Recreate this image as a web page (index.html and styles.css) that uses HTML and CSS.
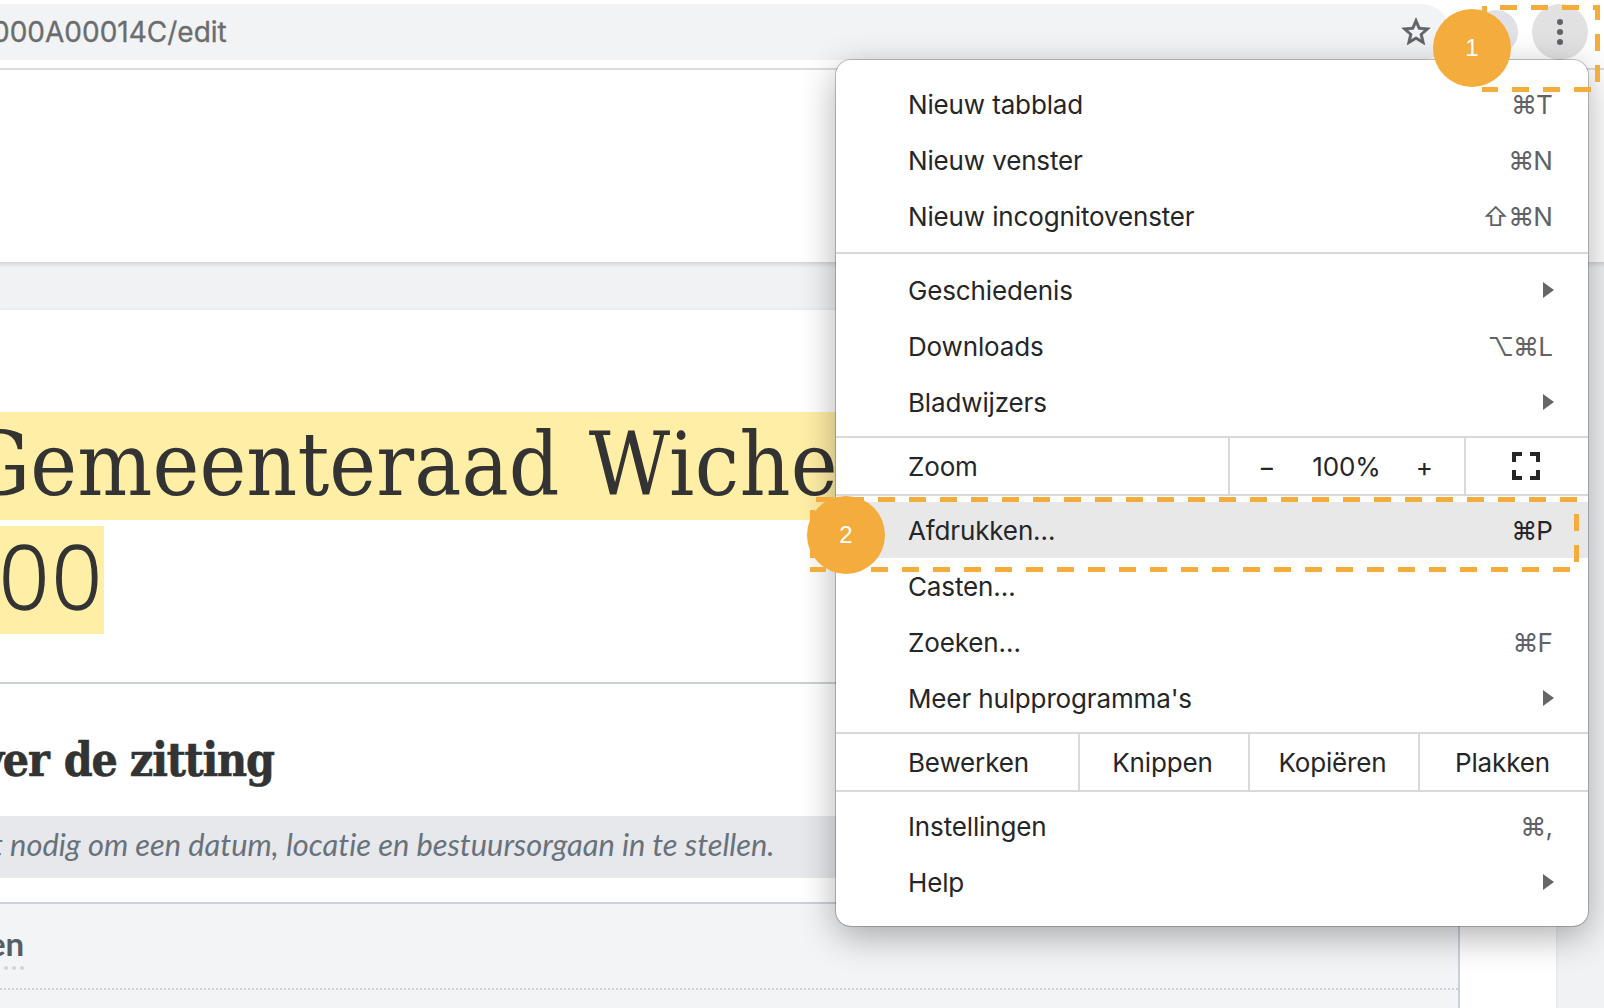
FILE: index.html
```html
<!DOCTYPE html>
<html lang="nl">
<head>
<meta charset="utf-8">
<title>Afdrukken</title>
<link rel="stylesheet" href="styles.css">
</head>
<body>
<div class="screen">
  <div class="toolbar">
    <div class="omnibox">
      <span class="url">000A00014C/edit</span>
      <svg class="star" viewBox="0 0 24 24"><path d="M22 9.24l-7.19-.62L12 2 9.19 8.63 2 9.24l5.46 4.73L5.82 21 12 17.27 18.18 21l-1.63-7.03L22 9.24zM12 15.4l-3.76 2.27 1-4.28-3.32-2.88 4.38-.38L12 6.1l1.71 4.04 4.38.38-3.32 2.88 1 4.28L12 15.4z"/></svg>
    </div>
    <div class="avatar"></div>
    <div class="more"><i></i><i></i><i></i></div>
  </div>
  <header class="page-header"></header>
  <main class="sheet">
    <h1 class="title">
      <span class="mark line-one"><span class="word-one">Gemeenteraad</span> <span class="word-two">Wiche</span></span>
      <span class="mark line-two">00</span>
    </h1>
    <h2 class="subtitle"><span class="cut">ver</span> <span class="rest">de zitting</span></h2>
    <p class="notice"><span>t nodig om een datum, locatie en bestuursorgaan in te stellen.</span></p>
    <div class="panel"><div class="panel-row"><span class="term">en</span></div></div>
  </main>

  <nav class="menu">
    <div class="group first">
      <div class="item"><span>Nieuw tabblad</span><kbd>⌘T</kbd></div>
      <div class="item"><span>Nieuw venster</span><kbd>⌘N</kbd></div>
      <div class="item"><span>Nieuw incognitovenster</span><kbd>⇧⌘N</kbd></div>
    </div>
    <div class="group history">
      <div class="item"><span>Geschiedenis</span><b class="arrow"></b></div>
      <div class="item"><span>Downloads</span><kbd>⌥⌘L</kbd></div>
      <div class="item"><span>Bladwijzers</span><b class="arrow"></b></div>
    </div>
    <div class="zoom-row">
      <span class="label">Zoom</span>
      <span class="zoom-controls"><span>−</span><span class="percent">100%</span><span>+</span></span>
      <span class="fullscreen"><svg viewBox="0 0 28 28"><path d="M0 10V0h10v4H4v6zM18 0h10v10h-4V4h-6zM0 18h4v6h6v4H0zM24 18h4v10H18v-4h6z"/></svg></span>
    </div>
    <div class="group">
      <div class="item active"><span>Afdrukken…</span><kbd>⌘P</kbd></div>
      <div class="item"><span>Casten…</span></div>
      <div class="item"><span>Zoeken…</span><kbd>⌘F</kbd></div>
      <div class="item"><span>Meer hulpprogramma's</span><b class="arrow"></b></div>
    </div>
    <div class="edit-row">
      <span class="label">Bewerken</span><span>Knippen</span><span>Kopiëren</span><span>Plakken</span>
    </div>
    <div class="group last">
      <div class="item"><span>Instellingen</span><kbd>⌘,</kbd></div>
      <div class="item"><span>Help</span><b class="arrow"></b></div>
    </div>
  </nav>

  <svg class="frames" viewBox="0 0 1604 1008">
    <path d="M1500 7.5H1600M1482 89.5H1498M1512 89.5H1591M816 499.5H1577M810 569.5H826M840 569.5H1571"/>
    <path d="M1597.5 5V20M1597.5 34V92M1576.5 514V562M812.5 510V558M1484.5 6V23"/>
  </svg>
  <div class="badge one">1</div>
  <div class="badge two">2</div>
</div>
</body>
</html>
```
FILE: styles.css
```css
* { box-sizing: border-box; }
body { margin: 0; }
.screen { position: relative; width: 1604px; height: 1008px; overflow: hidden; display: flex; flex-direction: column; background: #f0f2f4; font-family: Inter, "Liberation Sans", sans-serif; }

.toolbar { flex: none; display: flex; align-items: center; height: 70px; padding: 4px 16px 8px 0; background: #fff; border-bottom: 2px solid #dadce0; }
.omnibox { display: flex; align-items: center; justify-content: space-between; width: 1450px; height: 56px; padding-right: 17px; background: #f1f3f4; border-radius: 0 28px 28px 0; }
.url { margin-left: -8px; font-size: 28px; color: #6b6c6e; -webkit-text-stroke: .3px #6b6c6e; white-space: nowrap; }
.star { width: 34px; height: 34px; fill: #5f6368; stroke: #5f6368; stroke-width: .5; }
.avatar { width: 44px; height: 44px; margin-left: 24px; border-radius: 50%; background: #dfe1e7; }
.more { display: flex; flex-direction: column; align-items: center; justify-content: center; gap: 4px; width: 56px; height: 56px; margin-left: 14px; border-radius: 50%; background: #e1e1e1; }
.more i { width: 6px; height: 6px; border-radius: 50%; background: #5f6368; }

.page-header { flex: none; height: 192px; margin: 0 -10px; background: #fff; box-shadow: 0 1px 6px rgba(0,0,0,.2); clip-path: inset(0 0 -10px 0); }

.sheet { flex: none; width: 1556px; height: 720px; margin-top: 48px; padding-top: 102px; background: #fff; box-shadow: 0 0 4px rgba(0,0,0,.08); }
.title { display: flex; flex-direction: column; align-items: flex-start; gap: 6px; height: 272px; margin: 0; border-bottom: 2px solid #cbd0d6; font: 400 88px/106px "DejaVu Serif Condensed", "DejaVu Serif", serif; font-stretch: condensed; color: #333; }
.mark { height: 108px; background: #ffeea5; white-space: nowrap; }
.line-one { width: 1000px; }
.word-one { letter-spacing: .1px; margin-left: -33px; }
.word-two { margin-left: 4px; letter-spacing: .4px; }
.line-two { width: 104px; margin-left: -1px; width: 105px; font: 300 88px/98px "Open Sans", sans-serif; letter-spacing: 2.5px; -webkit-text-stroke: 1.4px #333; }
.subtitle { height: 132px; margin: 0; padding-top: 46px; font: 700 46px/60px "DejaVu Serif Condensed", "DejaVu Serif", serif; font-stretch: condensed; letter-spacing: -1.2px; color: #333; -webkit-text-stroke: .6px #333; white-space: nowrap; }
.cut { margin-left: -20px; }
.rest { margin-left: 2px; }
.notice { height: 62px; margin: 0; background: #e6e8ec; font: italic 400 30.8px/58px Lato, sans-serif; font-variant-ligatures: none; color: #69717b; white-space: nowrap; }
.notice span { margin-left: -8px; }
.panel { width: 1460px; height: 200px; margin-top: 24px; background: #f3f4f6; border: solid #cbd0da; border-width: 2px 2px 0 0; }
.panel-row { height: 86px; padding-top: 20px; border-bottom: 2px dotted #cfd3d9; }
.term { display: block; width: 36px; height: 46px; margin-left: -12px; border-bottom: 4px dotted #cfd4da; font: 700 33px/39px Lato, sans-serif; color: #565d64; }

.menu { position: absolute; left: 836px; top: 60px; width: 752px; height: 866px; border-radius: 15px; background: #fff; box-shadow: 0 0 0 1px rgba(0,0,0,.22), 0 10px 36px rgba(0,0,0,.32); font-size: 26px; letter-spacing: -.14px; color: #252628; }
.group { padding: 6px 0; }
.first { padding: 16px 0 8px; border-bottom: 2px solid #d9d9d9; }
.history { padding-top: 8px; }
.item { display: flex; align-items: center; justify-content: space-between; height: 56px; padding: 1px 34px 0 72px; }
.item.active { background: #e8e8e8; }
kbd { margin-right: 2px; font: inherit; letter-spacing: -.9px; color: #5f6368; }
.active kbd { color: #252628; }
.arrow { margin-bottom: 1px; border-left: 11px solid #666; border-top: 8px solid transparent; border-bottom: 8px solid transparent; }
.zoom-row, .edit-row { display: grid; height: 60px; border: solid #d9d9d9; border-width: 2px 0; }
.zoom-row { grid-template-columns: 392px 236px 1fr; }
.edit-row { grid-template-columns: 242px 170px 170px 170px; }
.zoom-row > *, .edit-row > * { display: flex; align-items: center; justify-content: center; padding-right: 3px; }
.zoom-row > * + *, .edit-row > * + * { border-left: 2px solid #d9d9d9; }
.zoom-row .label, .edit-row .label { justify-content: flex-start; padding-left: 72px; }
.zoom-controls { gap: 35px; }
.percent { padding-left: 2px; }
.fullscreen svg { width: 28px; height: 28px; fill: #252628; }

.frames { position: absolute; left: 0; top: 0; width: 1604px; height: 1008px; fill: none; stroke: #f4ac3d; stroke-width: 5; stroke-dasharray: 17 14; }
.badge { position: absolute; width: 78px; height: 78px; border-radius: 50%; background: #f4ac3d; color: #fff; font: 24px/78px "Liberation Sans", sans-serif; text-align: center; }
.one { left: 1433px; top: 9px; }
.two { left: 807px; top: 496px; }
```
